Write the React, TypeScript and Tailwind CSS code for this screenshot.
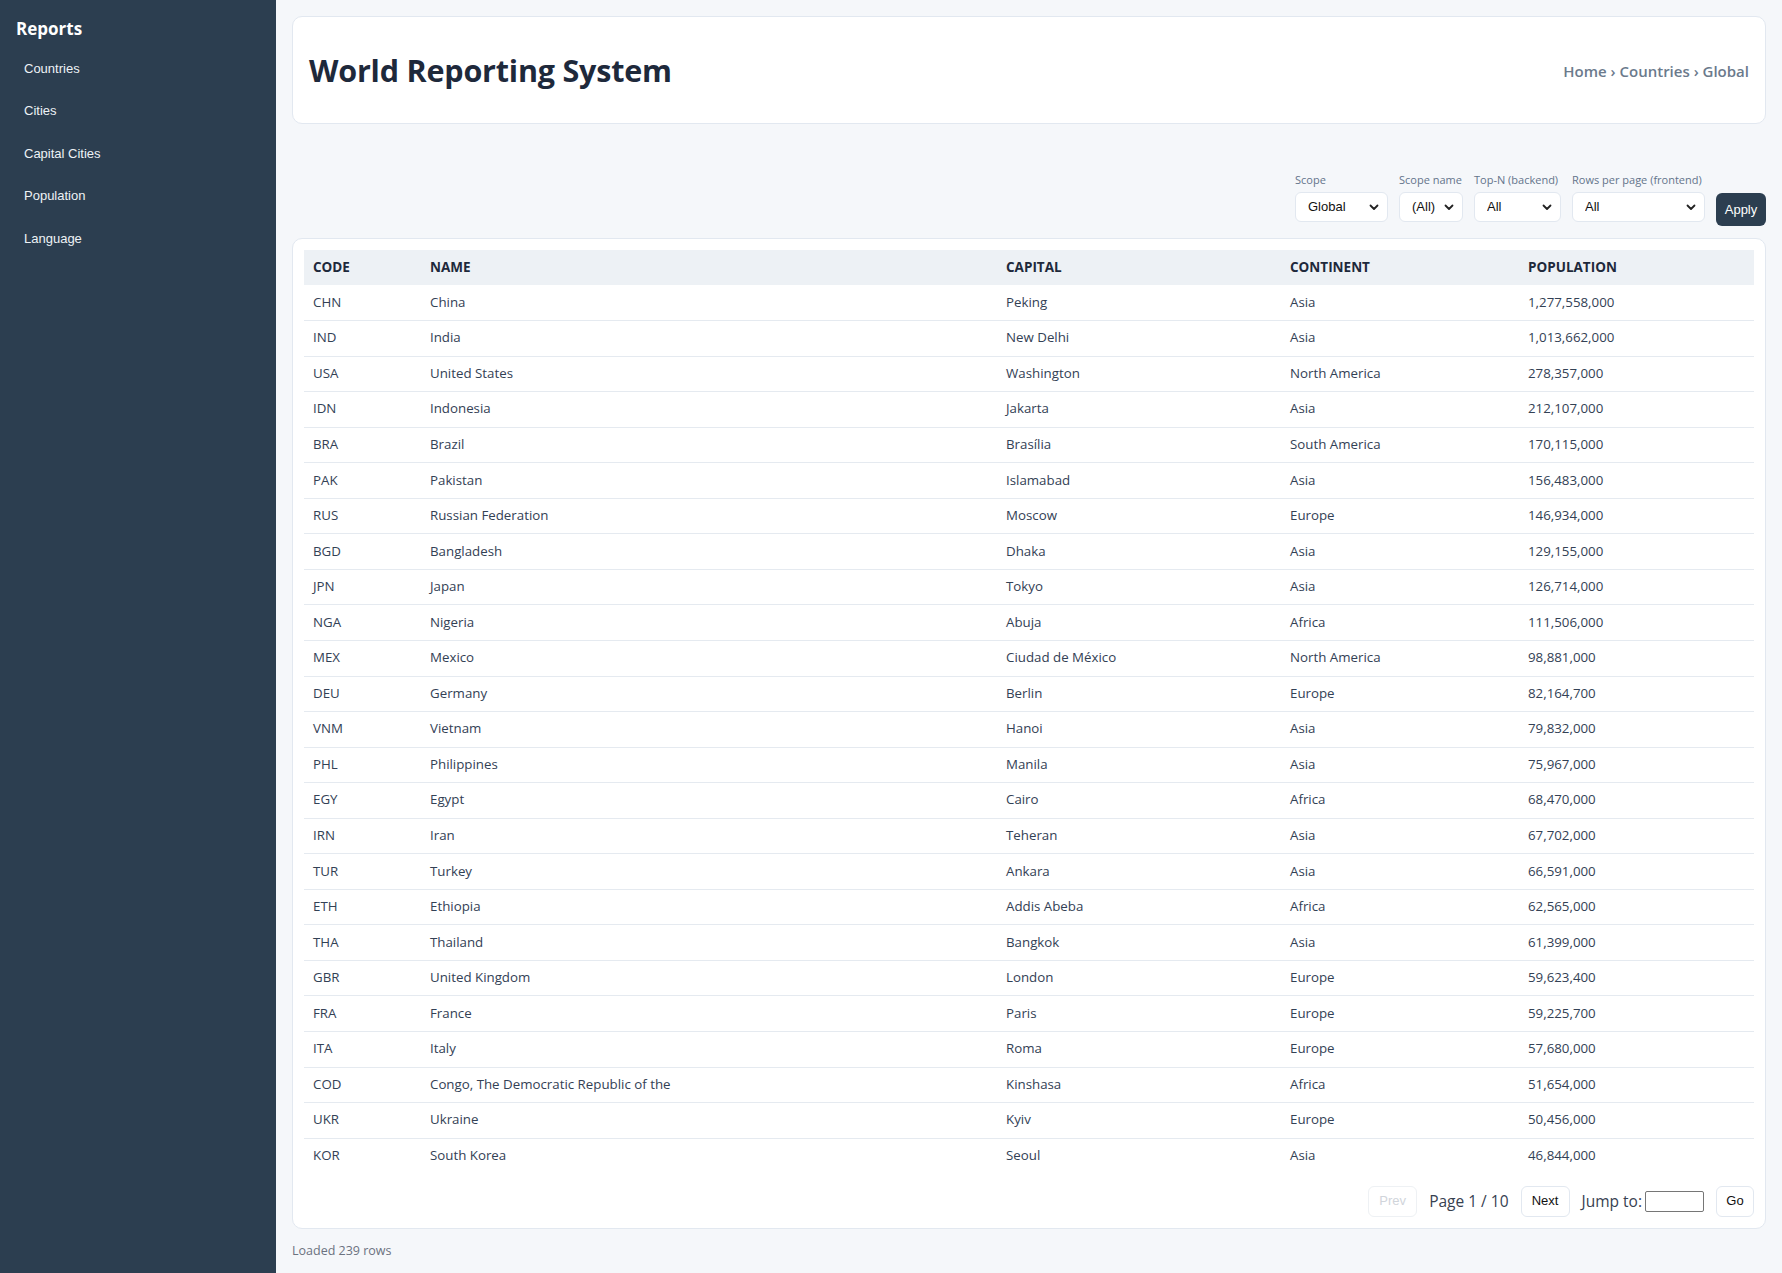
import React from "react";

const rows: [string, string, string, string, string][] = [
  ["CHN", "China", "Peking", "Asia", "1,277,558,000"],
  ["IND", "India", "New Delhi", "Asia", "1,013,662,000"],
  ["USA", "United States", "Washington", "North America", "278,357,000"],
  ["IDN", "Indonesia", "Jakarta", "Asia", "212,107,000"],
  ["BRA", "Brazil", "Brasília", "South America", "170,115,000"],
  ["PAK", "Pakistan", "Islamabad", "Asia", "156,483,000"],
  ["RUS", "Russian Federation", "Moscow", "Europe", "146,934,000"],
  ["BGD", "Bangladesh", "Dhaka", "Asia", "129,155,000"],
  ["JPN", "Japan", "Tokyo", "Asia", "126,714,000"],
  ["NGA", "Nigeria", "Abuja", "Africa", "111,506,000"],
  ["MEX", "Mexico", "Ciudad de México", "North America", "98,881,000"],
  ["DEU", "Germany", "Berlin", "Europe", "82,164,700"],
  ["VNM", "Vietnam", "Hanoi", "Asia", "79,832,000"],
  ["PHL", "Philippines", "Manila", "Asia", "75,967,000"],
  ["EGY", "Egypt", "Cairo", "Africa", "68,470,000"],
  ["IRN", "Iran", "Teheran", "Asia", "67,702,000"],
  ["TUR", "Turkey", "Ankara", "Asia", "66,591,000"],
  ["ETH", "Ethiopia", "Addis Abeba", "Africa", "62,565,000"],
  ["THA", "Thailand", "Bangkok", "Asia", "61,399,000"],
  ["GBR", "United Kingdom", "London", "Europe", "59,623,400"],
  ["FRA", "France", "Paris", "Europe", "59,225,700"],
  ["ITA", "Italy", "Roma", "Europe", "57,680,000"],
  ["COD", "Congo, The Democratic Republic of the", "Kinshasa", "Africa", "51,654,000"],
  ["UKR", "Ukraine", "Kyiv", "Europe", "50,456,000"],
  ["KOR", "South Korea", "Seoul", "Asia", "46,844,000"],
];

function Chevron() {
  return (
    <svg width="10" height="10" viewBox="0 0 10 10" className="pointer-events-none absolute right-[9px] top-1/2 -translate-y-1/2">
      <path d="M1.5 3.5 L5 7 L8.5 3.5" fill="none" stroke="#222" strokeWidth="1.8" strokeLinecap="round" strokeLinejoin="round" />
    </svg>
  );
}

function Select({ label, value, width }: { label: string; value: string; width: string }) {
  return (
    <div className="flex flex-col">
      <span className="mb-[5px] text-[11px] leading-[14px] text-[#64748b]">{label}</span>
      <div className={`relative ${width}`}>
        <select
          defaultValue={value}
          className="h-[30px] w-full appearance-none rounded-[6px] border border-[#e2e8f0] bg-white pl-[12px] pr-6 text-[13px] text-[#111] outline-none font-['Liberation_Sans',Arial,sans-serif]"
        >
          <option>{value}</option>
        </select>
        <Chevron />
      </div>
    </div>
  );
}

export default function App() {
  const items = ["Countries", "Cities", "Capital Cities", "Population", "Language"];
  return (
    <div className="flex min-h-[1273px] w-full bg-[#f5f7fa] font-['Open_Sans','Noto_Sans',sans-serif]">
      <aside className="w-[276px] shrink-0 bg-[#2c3e50] px-4 pt-[16px]">
        <div className="text-[17px] font-bold leading-[26px] text-white">Reports</div>
        <nav className="mt-[5px] flex flex-col">
          {items.map((it) => (
            <a
              key={it}
              className="flex h-[42.5px] items-center px-2 text-[13px] text-[#eef2f6] font-['Liberation_Sans',Arial,sans-serif]"
            >
              {it}
            </a>
          ))}
        </nav>
      </aside>

      <main className="flex min-w-0 flex-1 flex-col px-4 pt-4">
        <header className="flex h-[108px] items-center justify-between rounded-[10px] border border-[#e2e8f0] bg-white px-4">
          <h1 className="pt-[2px] text-[30.5px] font-bold tracking-[-0.2px] text-[#1e293b]">World Reporting System</h1>
          <div className="pt-[2px] text-[15px] font-semibold text-[#6b7a8c]">Home › Countries › Global</div>
        </header>

        <div className="mt-[49px] flex items-end justify-end gap-[11px] pr-0">
          <Select label="Scope" value="Global" width="w-[93px]" />
          <Select label="Scope name" value="(All)" width="w-[64px]" />
          <Select label="Top-N (backend)" value="All" width="w-[87px]" />
          <Select label="Rows per page (frontend)" value="All" width="w-[133px]" />
          <button className="mb-[-4px] h-[33px] w-[50px] rounded-[6px] bg-[#2c3e50] text-[13px] text-white font-['Liberation_Sans',Arial,sans-serif]">
            Apply
          </button>
        </div>

        <section className="mt-[16px] rounded-[10px] border border-[#e2e8f0] bg-white px-[11px] pb-[11px] pt-[11px]">
          <table className="w-full table-fixed border-collapse">
            <colgroup>
              <col className="w-[117px]" />
              <col className="w-[576px]" />
              <col className="w-[284px]" />
              <col className="w-[238px]" />
              <col />
            </colgroup>
            <thead>
              <tr className="bg-[#edf1f5]">
                {["CODE", "NAME", "CAPITAL", "CONTINENT", "POPULATION"].map((h) => (
                  <th key={h} className="h-[35px] px-[9px] text-left text-[13.5px] font-bold text-[#1e293b]">
                    {h}
                  </th>
                ))}
              </tr>
            </thead>
            <tbody>
              {rows.map((r) => (
                <tr key={r[0]} className="border-b border-[#e5eaf0] last:border-b-0">
                  {r.map((c, i) => (
                    <td key={i} className="h-[35.55px] px-[9px] text-[13.3px] text-[#334155]">
                      {c}
                    </td>
                  ))}
                </tr>
              ))}
            </tbody>
          </table>

          <div className="mt-[12px] flex items-center justify-end gap-[12px]">
            <button className="h-[31px] w-[49px] rounded-[6px] border border-[#eef1f4] bg-white text-[13px] text-[#d1d5db] font-['Liberation_Sans',Arial,sans-serif]">
              Prev
            </button>
            <span className="text-[15.5px] text-[#374151]">Page 1 / 10</span>
            <button className="h-[31px] w-[49px] rounded-[6px] border border-[#e2e8f0] bg-white text-[13px] text-[#111] font-['Liberation_Sans',Arial,sans-serif]">
              Next
            </button>
            <span className="flex items-center text-[15.5px] text-[#374151]">
              Jump to:
              <input className="ml-[3px] h-[21px] w-[59px] rounded-[2px] border border-[#767676] bg-white" />
            </span>
            <button className="h-[31px] w-[38px] rounded-[6px] border border-[#e2e8f0] bg-white text-[13px] text-[#111] font-['Liberation_Sans',Arial,sans-serif]">
              Go
            </button>
          </div>
        </section>

        <div className="mt-[13px] text-[12.5px] text-[#6b7280]">Loaded 239 rows</div>
      </main>
    </div>
  );
}
